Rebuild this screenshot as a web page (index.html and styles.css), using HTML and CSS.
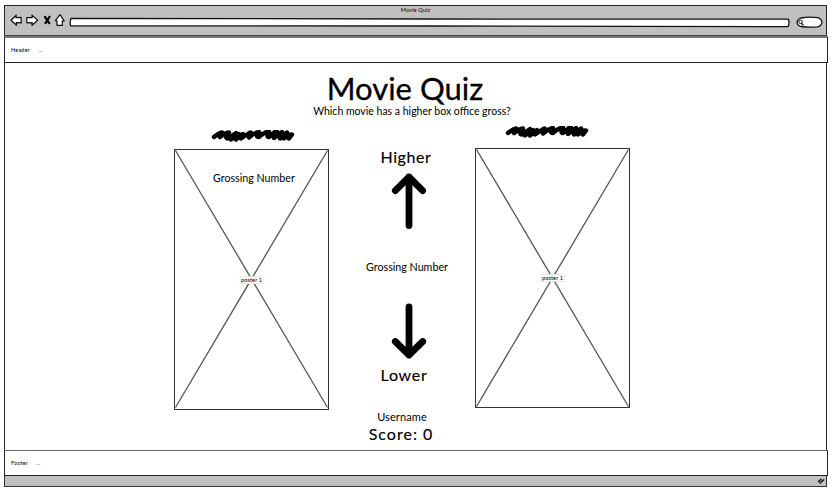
FILE: index.html
```html
<!DOCTYPE html>
<html lang="en">
<head>
<meta charset="utf-8">
<title>Movie Quiz</title>
<link rel="stylesheet" href="styles.css">
</head>
<body>
<div class="window">
  <div class="browser-bar">
    <div class="window-title">Movie Quiz</div>
    <div class="toolbar">
      <svg class="nav-icons" width="56" height="16" viewBox="0 0 56 16">
        <g fill="#fff" stroke="#111" stroke-width="1.2" stroke-linejoin="round">
          <path d="M1 8.3 6.2 3.2 6 5.700l5-.3.3 5.400-5-.1.2 2.500z"/>
          <path d="M27.700 8.300 22 3.100l.2 2.600-5.500-.1.200 5.200 5.300-.1-.2 2.600z"/>
          <path d="M50 2.700 45.300 8.600l1.600.3.1 4.500h5.400l-.2-4.300 2-.3z"/>
        </g>
        <path d="m34.500 4.200 5.200 7.700M40 4l-5 7.800" stroke="#000" stroke-width="2.200"/>
      </svg>
      <svg class="address" width="722" height="12" viewBox="0 0 722 12">
        <path d="M2 1.400 360 2l359.500.2q1.200 3.600-.4 7.400L360 9 1.600 8.900Q.5 5 2 1.400z" fill="#fff" stroke="#111" stroke-width="1.300"/>
      </svg>
      <svg class="search" width="27" height="13" viewBox="0 0 27 13">
        <path d="M5 2Q13 .3 22 1.700q4 1.500 3.900 5-.7 3.600-4.500 4.200-9 .8-16.400-.4Q1 9 1.100 6 1.500 3 5 2z" fill="#fff" stroke="#111" stroke-width="1.300"/>
        <circle cx="4.500" cy="5.800" r="1.700" fill="none" stroke="#111"/>
        <path d="m5.500 7.200 2 2.200" stroke="#111" stroke-width="1.300"/>
      </svg>
    </div>
  </div>
  <header class="band"><span>Header</span><span class="dots">...</span></header>
  <main class="page">
    <h1>Movie Quiz</h1>
    <p class="question">Which movie has a higher box office gross?</p>
    <div class="board">
      <section class="movie movie-left">
        <svg class="scribble" width="86" height="12" viewBox="0 0 86 12">
          <path d="M3 7Q8 3 11 2.500q2 0-2 4.500 5-4 9-4.500-5 6-1 6l8-5.500-5 6.500 8-5.500-3 5.500 7-5.500-2 4.500 9-6q3 0-1 5 6-5 10-5.500-4 5 0 5 5-5 10-5.500-3 6 0 5.500l7-6q3 0-2 7l8-6-2 6.500 7-6-3 6 6-4-1 4 3-4" fill="none" stroke="#000" stroke-width="4.400" stroke-linecap="round" stroke-linejoin="round"/>
        </svg>
        <div class="poster">
          <svg class="cross" width="155" height="260" viewBox="0 0 155 260"><path d="M1.500 1.500 153.500 258.500M153.500 1.500 1.500 258.500"/></svg>
          <span class="gross poster-gross">Grossing Number</span>
          <span class="poster-label">poster 1</span>
        </div>
      </section>
      <section class="choices">
        <div class="choice higher">Higher</div>
        <svg class="arrow arrow-up" width="36" height="56" viewBox="0 0 36 56"><path d="M18 52.500V4M4.300 17.600 18 4l13.700 13.600"/></svg>
        <div class="gross center-gross">Grossing Number</div>
        <svg class="arrow arrow-down" width="36" height="56" viewBox="0 0 36 56"><path d="M18 4v48M4.300 38.500 18 52l13.700-13.500"/></svg>
        <div class="choice lower">Lower</div>
        <div class="username">Username</div>
        <div class="choice score">Score: 0</div>
      </section>
      <section class="movie movie-right">
        <svg class="scribble" width="86" height="12" viewBox="0 0 86 12">
          <path d="M3 7Q8 3 11 2.500q2 0-2 4.500 5-4 9-4.500-5 6-1 6l8-5.500-5 6.500 8-5.500-3 5.500 7-5.500-2 4.500 9-6q3 0-1 5 6-5 10-5.500-4 5 0 5 5-5 10-5.500-3 6 0 5.500l7-6q3 0-2 7l8-6-2 6.500 7-6-3 6 6-4-1 4 3-4" fill="none" stroke="#000" stroke-width="4.400" stroke-linecap="round" stroke-linejoin="round"/>
        </svg>
        <div class="poster">
          <svg class="cross" width="155" height="260" viewBox="0 0 155 260"><path d="M1.500 1.500 153.500 258.500M153.500 1.500 1.500 258.500"/></svg>
          <span class="poster-label">poster 1</span>
        </div>
      </section>
    </div>
  </main>
  <footer class="band"><span>Footer</span><span class="dots">...</span></footer>
  <div class="status-bar">
    <svg width="8" height="8" viewBox="0 0 8 8"><path d="m1 5 3.500-3M2.500 6.500l4.500-4" stroke="#111" stroke-width="1.500"/></svg>
  </div>
</div>
</body>
</html>
```
FILE: styles.css
```css
* { box-sizing: border-box; }
body {
  margin: 0;
  min-height: 100vh;
  padding-top: 5px;
  background: #fff;
  color: #000;
  font-family: Lato, "Liberation Sans", sans-serif;
}
svg { display: block; flex: none; }
.window {
  display: flex;
  flex-direction: column;
  width: 824px;
  margin-left: 4px;
}
.browser-bar {
  height: 31px;
  margin-right: 1px;
  background: #c0c0c0;
  border: 1px solid #222;
  border-bottom-color: #444;
}
.window-title {
  height: 9px;
  padding-top: 1px;
  text-align: center;
  font-size: 5.5px;
  line-height: 7px;
  letter-spacing: .15px;
}
.toolbar { display: flex; align-items: flex-start; padding-left: 5px; }
.nav-icons { margin-top: -3px; }
.address { margin: 2px 0 0 3px; }
.search { margin: 1px 0 0 5px; }
.band {
  display: flex;
  align-items: center;
  gap: 8px;
  height: 26px;
  padding-left: 6px;
  border: 1px solid #222;
  font-size: 5.5px;
  letter-spacing: .2px;
}
header.band { height: 27px; border-top: 2px solid #777; }
footer.band { border-top-color: #666; }
.dots { color: #555; }
.page {
  height: 387px;
  margin: 0 1px 0 0;
  padding-top: 9px;
  border: solid #222;
  border-width: 0 1px;
}
h1 {
  width: 164px;
  margin: 0 0 0 318px;
  text-align: center;
  white-space: nowrap;
  font-size: 31px;
  font-weight: 400;
  line-height: 32px;
  -webkit-text-stroke: .3px #000;
}
.question {
  width: 220px;
  margin: 0 0 0 297px;
  text-align: center;
  white-space: nowrap;
  font-size: 10.5px;
  line-height: 14px;
}
.board {
  display: grid;
  grid-template-columns: 155px 146px 155px;
  margin-left: 169px;
}
.movie-left { padding-top: 12px; }
.movie-right { padding-top: 8px; }
.scribble { margin-left: 37px; }
.movie-right .scribble { margin-left: 30px; }
.poster {
  position: relative;
  width: 155px;
  height: 260px;
  margin-top: 7px;
  border: 1px solid #333;
}
.movie-left .poster { height: 261px; }
.movie-right .poster { margin-top: 10px; }
.cross { position: absolute; left: -1px; top: -1px; }
.cross path { fill: none; stroke: #555; stroke-width: 1.3; }
.gross { font-size: 10.7px; line-height: 14px; white-space: nowrap; }
.poster-gross { position: absolute; left: 38px; top: 21px; }
.poster-label {
  position: absolute;
  left: 50%;
  top: 50%;
  transform: translate(-50%, -50%);
  padding: 0 1px;
  border: 1px solid #e4e4e4;
  border-radius: 2px;
  background: #fff;
  font-size: 5.8px;
  line-height: 6px;
  white-space: nowrap;
}
.choices {
  display: flex;
  flex-direction: column;
  padding-top: 29px;
}
.choices > div { text-align: center; width: 100px; white-space: nowrap; }
.choice { font-size: 16px; line-height: 20px; -webkit-text-stroke: .15px #000; }
.arrow { margin-left: 62px; }
.arrow path {
  fill: none;
  stroke: #000;
  stroke-width: 6.8;
  stroke-linecap: round;
  stroke-linejoin: round;
}
.higher { margin-left: 27px; letter-spacing: .6px; }
.arrow-up { margin-top: 6px; }
.center-gross { margin: 31px 0 0 28px; }
.arrow-down { margin-top: 29px; }
.lower { margin: 6px 0 0 25px; letter-spacing: .7px; }
.username { margin: 25px 0 0 23px; font-size: 11px; line-height: 14px; letter-spacing: .1px; }
.score { margin-left: 22px; letter-spacing: 1px; }
.status-bar {
  display: flex;
  justify-content: flex-end;
  height: 11px;
  margin-right: 1px;
  padding: 1px;
  background: #c0c0c0;
  border: 1px solid #333;
  border-top: 0;
}
```
